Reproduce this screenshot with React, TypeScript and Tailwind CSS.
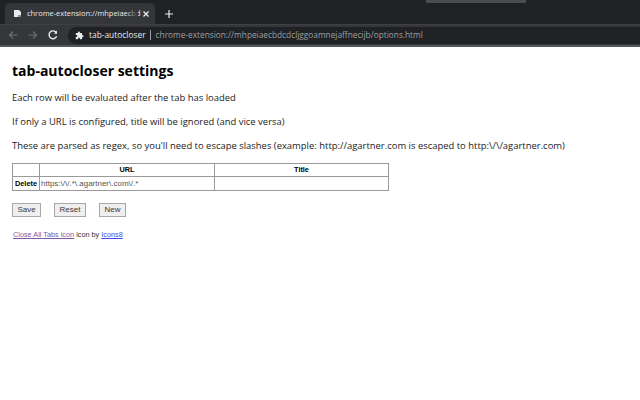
import React from "react";

function Btn({ children, w }: { children: React.ReactNode; w: string }) {
  return (
    <div className={`${w} h-[14px] flex items-center justify-center bg-[#efefef] border border-[#a8a8a8] text-[8px] leading-none text-[#3a3a3a]`}>
      {children}
    </div>
  );
}

export default function App() {
  return (
    <div className="w-[640px] h-[400px] overflow-hidden bg-white flex flex-col font-['Liberation_Sans',sans-serif]">
      <div className="h-[24px] bg-[#202124] flex items-end pl-[5px] relative">
        <div className="absolute top-0 left-[426px] w-[100px] h-[3px] bg-[#4a4b4f]" />
        <div className="w-[150px] h-[21px] bg-[#35363a] rounded-t-[5px] flex items-center pl-[8px] pr-[5px] relative font-['Open_Sans',sans-serif]">
          <svg width="9" height="9" viewBox="0 0 9 9" className="shrink-0">
            <path d="M1 1h5l2 2v5H1z" fill="#e8eaed" />
            <path d="M5 6h3v2H5z" fill="#8a8b8f" />
          </svg>
          <span className="ml-[5px] text-[7.45px] leading-none text-[#e8eaed] whitespace-nowrap">chrome-extension://mhpeiaecbd</span>
          <div className="absolute top-0 bottom-0 left-[122px] w-[11px] bg-gradient-to-r from-transparent to-[#35363a]" />
          <svg width="8" height="8" viewBox="0 0 8 8" className="absolute left-[137px] top-[7px]">
            <path d="M1.5 1.5l5 5M6.5 1.5l-5 5" stroke="#e8eaed" strokeWidth="1.4" />
          </svg>
        </div>
        <svg width="10" height="10" viewBox="0 0 10 10" className="ml-[9px] mb-[5px]">
          <path d="M5 1v8M1 5h8" stroke="#e8eaed" strokeWidth="1.2" />
        </svg>
      </div>
      <div className="h-[20px] bg-[#35363a] flex items-center pl-[7px] border-t border-[#3f4044] box-content">
        <svg width="12" height="12" viewBox="0 0 12 12" className="shrink-0">
          <path d="M10.5 6h-8M6 2.5L2.5 6 6 9.5" stroke="#6f7174" strokeWidth="1.1" fill="none" />
        </svg>
        <svg width="12" height="12" viewBox="0 0 12 12" className="shrink-0 ml-[8px]">
          <path d="M1.5 6h8M6 2.5L9.5 6 6 9.5" stroke="#6f7174" strokeWidth="1.1" fill="none" />
        </svg>
        <svg width="12" height="12" viewBox="0 0 12 12" className="shrink-0 ml-[8px]">
          <path d="M9.6 7.2A3.9 3.9 0 1 1 9.2 3.6" stroke="#e8eaed" strokeWidth="1.4" fill="none" />
          <path d="M10 1.5v3.2H6.8z" fill="#e8eaed" />
        </svg>
        <div className="ml-[9px] flex-1 h-[17px] bg-[#202124] rounded-l-[9px] flex items-center pl-[7px] whitespace-nowrap overflow-hidden font-['Open_Sans',sans-serif]">
          <svg width="9" height="9" viewBox="0 0 24 24" className="shrink-0">
            <path fill="#e8eaed" d="M20.5 11H19V7a2 2 0 0 0-2-2h-4V3.5a2.5 2.5 0 0 0-5 0V5H4a2 2 0 0 0-2 2v3.8h1.5a2.7 2.7 0 0 1 0 5.4H2V20a2 2 0 0 0 2 2h3.8v-1.5a2.7 2.7 0 0 1 5.4 0V22H17a2 2 0 0 0 2-2v-4h1.5a2.5 2.5 0 0 0 0-5z" />
          </svg>
          <span className="ml-[5px] text-[8.4px] leading-none text-[#e8eaed]">tab-autocloser</span>
          <span className="ml-[4px] w-px h-[10px] bg-[#9aa0a6]" />
          <span className="ml-[5px] text-[8.3px] leading-none text-[#9aa0a6]">chrome-extension://mhpeiaecbdcdcljggoamnejaffnecijb/options.html</span>
        </div>
      </div>
      <div className="h-[2px] bg-[#55565a]" />
      <div className="flex-1 pl-[12px] pt-[14px] font-['Open_Sans',sans-serif]">
        <h1 className="text-[14px] leading-[20px] font-bold text-black">tab-autocloser settings</h1>
        <p className="mt-[10px] text-[9.45px] leading-[14px] text-[#222]">Each row will be evaluated after the tab has loaded</p>
        <p className="mt-[10px] text-[9.45px] leading-[14px] text-[#222]">If only a URL is configured, title will be ignored (and vice versa)</p>
        <p className="mt-[10px] text-[9.45px] leading-[14px] text-[#222]">These are parsed as regex, so you'll need to escape slashes (example: http://agartner.com is escaped to http:\/\/agartner.com)</p>
        <div className="mt-[10px] w-[377px] border border-[#9a9a9a] font-['Liberation_Sans',sans-serif] text-[7.3px] leading-none text-[#222]">
          <div className="flex h-[13px] border-b border-[#9a9a9a]">
            <div className="w-[27px] border-r border-[#9a9a9a]" />
            <div className="w-[175px] border-r border-[#9a9a9a] flex items-center justify-center font-bold text-black">URL</div>
            <div className="flex-1 flex items-center justify-center font-bold text-black">Title</div>
          </div>
          <div className="flex h-[13px]">
            <div className="w-[27px] border-r border-[#9a9a9a] flex items-center justify-center font-bold text-black">Delete</div>
            <div className="w-[175px] border-r border-[#9a9a9a] flex items-center pl-[1px] text-[8px] text-[#555]">https:\/\/.*\.agartner\.com\/.*</div>
            <div className="flex-1" />
          </div>
        </div>
        <div className="mt-[12px] flex font-['Liberation_Sans',sans-serif]">
          <Btn w="w-[29px]">Save</Btn>
          <div className="ml-[13px]"><Btn w="w-[32px]">Reset</Btn></div>
          <div className="ml-[13px]"><Btn w="w-[27px]">New</Btn></div>
        </div>
        <div className="mt-[13px] pl-px text-[7.3px] leading-[10px] font-['Liberation_Sans',sans-serif] text-[#333]">
          <a className="underline text-[#7a5aa8]">Close All Tabs icon</a> icon by <a className="underline text-[#4a4ae8]">Icons8</a>
        </div>
      </div>
    </div>
  );
}
